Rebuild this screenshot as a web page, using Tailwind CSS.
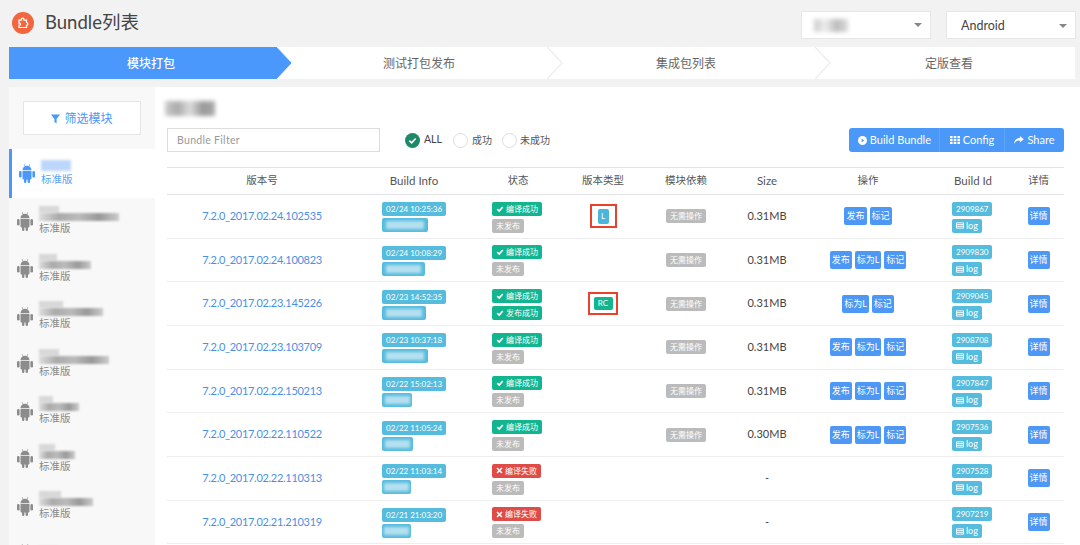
<!DOCTYPE html>
<html lang="zh">
<head>
  <meta charset="UTF-8"/>
  <title>Bundle列表</title>
  <script src="https://cdn.jsdelivr.net/npm/@tailwindcss/browser@4"></script>
</head>
<body class="bg-[#f3f2f2] h-[545px] overflow-hidden font-['Lato','Noto_Sans_CJK_SC',sans-serif] text-[#555]">

<!-- Header -->
<div class="h-[47px] pl-3 pr-[4px] pb-[2px] flex items-center">
  <div class="w-[22px] h-[22px] rounded-full bg-[#f2663f] flex items-center justify-center">
    <svg viewBox="0 0 14 14" class="w-[14px] h-[14px]" fill="none" stroke="#fff" stroke-width="1.2"><path d="M3 4.200h2.200a1.500 1.500 0 1 1 2.800 0h2.500v2.300a1.400 1.400 0 0 1 0 2.800v2.200H3V9.200h.6a1 1 0 0 0 0-2H3z"/></svg>
  </div>
  <h1 class="ml-[11px] text-[18.5px] text-[#444]">Bundle列表</h1>
  <div class="ml-auto self-start mt-[11px] w-[130px] h-[28px] bg-white border border-[#e6e6e6] flex items-center pl-3 pr-2">
    <div class="w-[34px] h-[13px] blur-[2px] bg-[linear-gradient(90deg,#ccc,#eee,#bbb,#ddd)]"></div>
    <span class="ml-auto w-0 h-0 border-x-[4px] border-x-transparent border-t-[4px] border-t-[#888]"></span>
  </div>
  <div class="ml-[15px] self-start mt-[11px] w-[130px] h-[28px] bg-white border border-[#e6e6e6] flex items-center pl-[14px] pt-[2px] pr-2 text-[12.5px] text-[#444]">
    Android
    <span class="ml-auto w-0 h-0 border-x-[4px] border-x-transparent border-t-[4px] border-t-[#888]"></span>
  </div>
</div>

<!-- Steps -->
<div class="ml-[9px] mr-[5px] h-[32px] bg-white flex text-[12px] text-[#666]">
  <div class="relative w-[268px] flex items-center justify-center pl-[16px] pt-[1px] bg-[#4a98fb] text-white font-medium">
    模块打包
    <svg class="absolute left-full top-0 z-10" width="16" height="32"><path d="M0 0 15 16 0 32z" fill="#4a98fb"/><path d="M0 0 15 16 0 32" fill="none" stroke="#e3effd"/></svg>
  </div>
  <div class="relative w-[270px] flex items-center justify-center pl-[14px] pt-[1px]">
    测试打包发布
    <svg class="absolute left-full top-0" width="16" height="32" fill="none"><path d="M0 0 15 16 0 32" stroke="#eee" stroke-width="1.5"/></svg>
  </div>
  <div class="relative w-[268px] flex items-center justify-center pl-[10px] pt-[1px]">
    集成包列表
    <svg class="absolute left-full top-0" width="16" height="32" fill="none"><path d="M0 0 15 16 0 32" stroke="#eee" stroke-width="1.5"/></svg>
  </div>
  <div class="flex-1 flex items-center justify-center pl-2 pt-[1px]">定版查看</div>
</div>

<!-- Content -->
<div class="mt-2 ml-[9px] flex">

  <!-- Sidebar -->
  <div class="w-[146px] shrink-0 bg-[#f8f8f8] h-[460px] overflow-hidden">
    <div class="pt-[14px] pl-[14px] h-[62px]">
      <button class="w-[118px] h-[34px] pt-[2px] bg-white border border-[#e5e5e5] flex items-center justify-center gap-1 text-[12px] text-[#4a98fb]">
        <svg viewBox="0 0 10 10" class="w-[9px] h-[10px]" fill="#4a98fb"><path d="M0 0h10L6.200 5v5L3.800 8.400V5z"/></svg>
        筛选模块
      </button>
    </div>
    <div id="sidebar"></div>
  </div>

  <!-- Main -->
  <div class="flex-1 bg-white h-[460px] pl-3 pr-4">
    <div class="pt-[14px] h-[41px]">
      <div class="-ml-[2px] w-[50px] h-[15px] blur-[2px] bg-[linear-gradient(90deg,#ccc,#aaa,#ddd,#999,#aaa)]"></div>
    </div>
    <div class="flex items-center h-[24px]">
      <div class="w-[213px] h-[24px] border border-[#ddd] flex items-center pl-[9px] pt-[1px] text-[10.5px] text-[#999] tracking-[0.3px]">Bundle Filter</div>
      <div class="ml-[25px] w-[15px] h-[15px] rounded-full bg-[#1c8a66] flex items-center justify-center">
        <svg viewBox="0 0 10 10" class="w-[9px] h-[9px]" fill="none" stroke="#fff" stroke-width="1.800"><path d="M1.500 5.200 4 7.500 8.500 2.800"/></svg>
      </div>
      <span class="ml-[4px] text-[10.5px] text-[#444]">ALL</span>
      <div class="ml-[11px] w-[15px] h-[15px] rounded-full border border-[#ddd]"></div>
      <span class="ml-[4px] text-[10px] text-[#555]">成功</span>
      <div class="ml-[10px] w-[15px] h-[15px] rounded-full border border-[#ddd]"></div>
      <span class="ml-[3px] text-[10px] text-[#555]">未成功</span>
      <div class="ml-auto w-[215px] h-[24px] bg-[#4a98f7] rounded-[3px] flex items-center text-white text-[11px]">
        <div class="w-[91px] flex items-center justify-end gap-[3px] border-r border-[#5fa5f8] pr-2 h-full">
          <svg viewBox="0 0 10 10" class="w-[9px] h-[9px]"><circle cx="5" cy="5" r="5" fill="#fff"/><path d="M4 3l3 2-3 2z" fill="#4a98f7"/></svg>
          Build Bundle
        </div>
        <div class="w-[65px] flex items-center justify-center gap-[3px] border-r border-[#5fa5f8] h-full">
          <svg viewBox="0 0 10 8" class="w-[10px] h-2" fill="#fff"><path d="M0 0h2.600v2.200H0zM3.700 0h2.600v2.200H3.700zM7.400 0H10v2.200H7.400zM0 2.900h2.600v2.200H0zM3.700 2.900h2.600v2.200H3.700zM7.400 2.900H10v2.200H7.400zM0 5.800h2.600V8H0zM3.700 5.800h2.600V8H3.700zM7.400 5.800H10V8H7.400z"/></svg>
          Config
        </div>
        <div class="flex-1 flex items-center justify-center gap-[3px]">
          <svg viewBox="0 0 11 9" class="w-[10px] h-2" fill="#fff"><path d="M6.500 0 11 3.700 6.500 7.400V5.200C3.500 5.200 1.500 6 0 9 .2 5 2.500 2.300 6.500 2.200z"/></svg>
          Share
        </div>
      </div>
    </div>

    <table class="mt-[15px] w-[897px] table-fixed text-center">
      <colgroup>
        <col class="w-[190px]"/><col class="w-[114px]"/><col class="w-[94px]"/><col class="w-[76px]"/><col class="w-[90px]"/><col class="w-[72px]"/><col class="w-[130px]"/><col class="w-[80px]"/><col class="w-[51px]"/>
      </colgroup>
      <thead class="text-[10.5px] text-[#555]">
        <tr class="h-[27px] border-y border-[#e4e4e4]">
          <th class="font-normal">版本号</th>
          <th class="font-normal text-[11.5px]">Build Info</th>
          <th class="font-normal">状态</th>
          <th class="font-normal">版本类型</th>
          <th class="font-normal">模块依赖</th>
          <th class="font-normal text-[11.5px]">Size</th>
          <th class="font-normal">操作</th>
          <th class="font-normal text-[11.5px]">Build Id</th>
          <th class="font-normal">详情</th>
        </tr>
      </thead>
      <tbody id="rows"></tbody>
    </table>
  </div>
</div>

<script>
  const androidIcon = (color) => `<svg viewBox="0 0 16 19" class="w-4 h-[19px] shrink-0" fill="${color}"><path d="M3.500 6.300a4.500 4.500 0 0 1 9 0zM5.200 0l1.300 2.400-.5.300-1.300-2.400zM10.800 0l.5.300-1.300 2.400-.5-.3z"/><path d="M3.500 7h9v7.500a1 1 0 0 1-1 1h-7a1 1 0 0 1-1-1z"/><rect y="7" width="2.600" height="6.500" rx="1.300"/><rect x="13.400" y="7" width="2.600" height="6.500" rx="1.300"/><rect x="5" y="14" width="2.400" height="5" rx="1.200"/><rect x="8.600" y="14" width="2.400" height="5" rx="1.200"/></svg>`;

  const modules = [
    { top: 30, bottom: 30, active: true },
    { top: 20, bottom: 80 },
    { top: 18, bottom: 52 },
    { top: 24, bottom: 64 },
    { top: 20, bottom: 70 },
    { top: 14, bottom: 40 },
    { top: 16, bottom: 36 },
    { top: 22, bottom: 54 },
    { top: 20, bottom: 56, cut: true }
  ];

  document.getElementById("sidebar").innerHTML = modules.map((m) => m.active
    ? `<div class="h-[48.500px] bg-white border-l-[3px] border-[#4a98fb] flex items-center pl-[7px] gap-[6px]">
         ${androidIcon("#4a98fb")}
         <div class="text-[10.500px] leading-[15px] text-[#5b9ff5]">
           <div class="h-[11px] mb-[1px] blur-[1.500px] bg-[#bcd6fb]" style="width:${m.bottom}px"></div>
           标准版
         </div>
       </div>`
    : `<div class="h-[47.500px] flex items-center pl-2 gap-[6px]">
         ${androidIcon("#8c8c8c")}
         <div class="text-[10.500px] leading-[15px] text-[#888]">
           <div class="h-[7px] blur-[1px] bg-[#d8d8d8]" style="width:${m.top}px"></div>
           <div class="h-[8px] blur-[1px] bg-[linear-gradient(90deg,#ddd,#aaa,#bbb,#999,#ccc)]" style="width:${m.bottom}px"></div>
           ${m.cut ? "" : "标准版"}
         </div>
       </div>`).join("");

  const rows = [
    { v: "7.2.0_2017.02.24.102535", t: "02/24 10:25:36", blur: 46, pub: false, type: "L", size: "0.31MB", ops: ["发布", "标记"], id: "2909867" },
    { v: "7.2.0_2017.02.24.100823", t: "02/24 10:08:29", blur: 43, pub: false, size: "0.31MB", ops: ["发布", "标为L", "标记"], id: "2909830" },
    { v: "7.2.0_2017.02.23.145226", t: "02/23 14:52:35", blur: 44, pub: true, type: "RC", size: "0.31MB", ops: ["标为L", "标记"], id: "2909045" },
    { v: "7.2.0_2017.02.23.103709", t: "02/23 10:37:18", blur: 46, pub: false, size: "0.31MB", ops: ["发布", "标为L", "标记"], id: "2908708" },
    { v: "7.2.0_2017.02.22.150213", t: "02/22 15:02:13", blur: 30, pub: false, size: "0.31MB", ops: ["发布", "标为L", "标记"], id: "2907847" },
    { v: "7.2.0_2017.02.22.110522", t: "02/22 11:05:24", blur: 31, pub: false, size: "0.30MB", ops: ["发布", "标为L", "标记"], id: "2907536" },
    { v: "7.2.0_2017.02.22.110313", t: "02/22 11:03:14", blur: 29, failed: true, size: "-", ops: [], id: "2907528" },
    { v: "7.2.0_2017.02.21.210319", t: "02/21 21:03:20", blur: 29, failed: true, size: "-", ops: [], id: "2907219" }
  ];

  const check = `<svg viewBox="0 0 10 10" class="w-2 h-2" fill="none" stroke="#fff" stroke-width="2"><path d="M1.500 5.200 4 7.500 8.500 2.500"/></svg>`;
  const cross = `<svg viewBox="0 0 10 10" class="w-[7px] h-[7px]" fill="none" stroke="#fff" stroke-width="2.200"><path d="M1.500 1.500l7 7M8.500 1.500l-7 7"/></svg>`;
  const tag = "h-[14px] rounded-[2px] px-[4px] text-[8px] leading-[14px] text-white flex items-center gap-[2px] w-fit whitespace-nowrap";

  function typeCell(type) {
    if (type === "L") return `<div class="w-[27px] h-[24px] mx-auto border-2 border-[#e8412c] flex items-center justify-center"><span class="w-[11px] h-[15px] rounded-[2px] bg-[#4bb5dc] text-white text-[8px] leading-[15px]">L</span></div>`;
    if (type === "RC") return `<div class="w-[30px] h-[23px] mx-auto border-2 border-[#e8412c] flex items-center justify-center"><span class="w-[19px] h-[13px] rounded-[2px] bg-[#13b58f] text-white text-[8px] leading-[13px]">RC</span></div>`;
    return "";
  }

  document.getElementById("rows").innerHTML = rows.map((r) => `
    <tr class="h-[43.670px] border-b border-[#eee]">
      <td class="text-[11px] tracking-[-0.3px] text-[#4a90e2]">${r.v}</td>
      <td class="pl-[25px] pt-[2px]">
        <div class="flex flex-col gap-[2px]">
          <span class="${tag} bg-[#56bcde]">${r.t}</span>
          <div class="h-[14px] rounded-[2px] bg-[#56bcde] flex items-center justify-center" style="width:${r.blur}px"><div class="h-2 w-5/6 bg-[#b5e0f0] blur-[1.500px]"></div></div>
        </div>
      </td>
      <td class="pl-[21px] pt-[2px]">
        <div class="flex flex-col gap-[3px]">
          ${r.failed
            ? `<span class="${tag} bg-[#df4b46]">${cross}编译失败</span>`
            : `<span class="${tag} bg-[#13b58f]">${check}编译成功</span>`}
          ${r.pub
            ? `<span class="${tag} bg-[#13b58f]">${check}发布成功</span>`
            : `<span class="${tag} bg-[#bbb]">未发布</span>`}
        </div>
      </td>
      <td>${typeCell(r.type)}</td>
      <td>${r.failed ? "" : `<span class="${tag} bg-[#bbb] mx-auto">无需操作</span>`}</td>
      <td class="text-[11px] text-[#444]">${r.size}</td>
      <td>
        <div class="flex justify-center gap-[3px]">
          ${r.ops.map((op) => `<span class="h-[18px] rounded-[2px] bg-[#4d98f5] px-[2px] text-[9px] leading-[18px] text-white whitespace-nowrap">${op}</span>`).join("")}
        </div>
      </td>
      <td class="pl-[19px] pt-[2px]">
        <div class="flex flex-col gap-[3px]">
          <span class="${tag} bg-[#56bcde]">${r.id}</span>
          <span class="${tag} bg-[#56bcde] gap-0 text-[9px]"><svg viewBox="0 0 9 7" class="w-2 h-[7px]" fill="none" stroke="#fff"><path d="M.5.500h8v6h-8zM.5 2.500h8M.5 4.500h8"/></svg>log</span>
        </div>
      </td>
      <td><span class="block mx-auto h-[18px] rounded-[2px] bg-[#4d98f5] w-[22px] text-[9px] leading-[18px] text-white whitespace-nowrap">详情</span></td>
    </tr>`).join("");
</script>
</body>
</html>
